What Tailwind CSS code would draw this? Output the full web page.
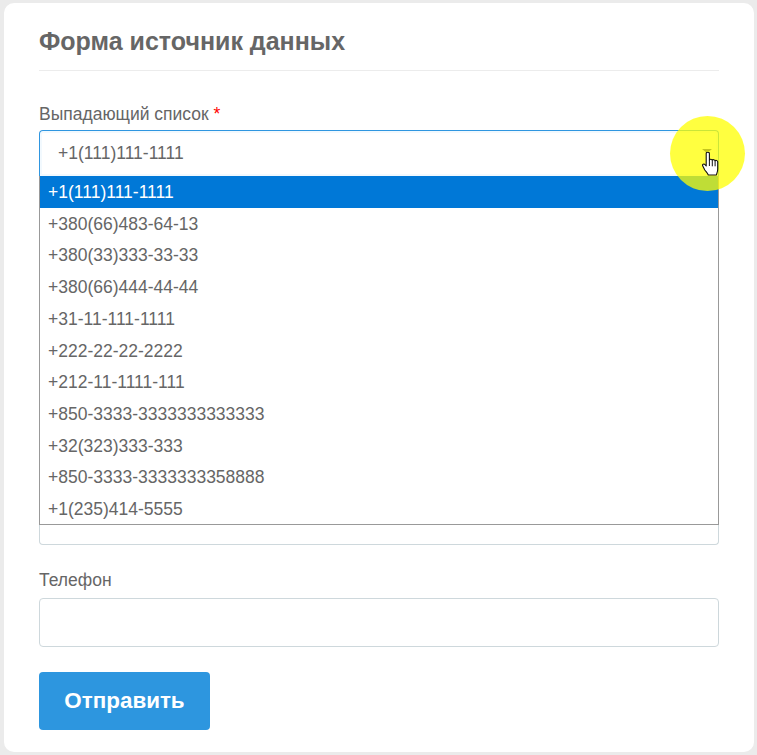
<!DOCTYPE html>
<html lang="ru">
<head>
<meta charset="utf-8">
<script src="https://cdn.jsdelivr.net/npm/@tailwindcss/browser@4"></script>
</head>
<body class="bg-[#ebebeb] font-['Liberation_Sans',Arial,sans-serif] text-[#666]">
<div class="h-[755px] w-[757px] pl-[4px] pr-[3px] pt-[3px]">
  <form class="relative h-[749px] rounded-[10px] bg-white px-[35px] pt-[22px]">
    <h2 class="border-b border-[#ececec] pb-[13px] text-[25px] leading-[32px] font-bold text-[#666]">Форма источник данных</h2>
    <div class="mt-[33px] text-[17.5px] leading-[20px]">Выпадающий список <span class="text-[#f00]">*</span></div>
    <div class="relative mt-[6px]">
      <div class="relative flex h-[46px] items-center rounded-t-[4px] border border-b-0 border-[#2f96e0] bg-white pl-[18px] text-[17.5px] shadow-[inset_0_0_0_2px_#f2f9fe]">
        +1(111)111-1111
      </div>
      <ul class="absolute top-[46px] right-0 left-0 z-10 h-[349px] border border-t-0 border-[#999] bg-white text-[17.5px] leading-[30.7px]">
        <li class="bg-[#0078d7] pt-[1px] pl-[8px] text-white">+1(111)111-1111</li>
        <li class="pt-[1px] pl-[8px]">+380(66)483-64-13</li>
        <li class="pt-[1px] pl-[8px]">+380(33)333-33-33</li>
        <li class="pt-[1px] pl-[8px]">+380(66)444-44-44</li>
        <li class="pt-[1px] pl-[8px]">+31-11-111-1111</li>
        <li class="pt-[1px] pl-[8px]">+222-22-22-2222</li>
        <li class="pt-[1px] pl-[8px]">+212-11-1111-111</li>
        <li class="pt-[1px] pl-[8px]">+850-3333-3333333333333</li>
        <li class="pt-[1px] pl-[8px]">+32(323)333-333</li>
        <li class="pt-[1px] pl-[8px]">+850-3333-3333333358888</li>
        <li class="pt-[1px] pl-[8px]">+1(235)414-5555</li>
      </ul>
      <div class="h-[369px] rounded-b-[4px] border border-t-0 border-[#ced8dc]"></div>
    </div>
    <div class="mt-[25px] text-[17.5px] leading-[20px]">Телефон</div>
    <div class="mt-[8px] h-[49px] rounded-[4px] border border-[#ced8dc] bg-white"></div>
    <button type="button" class="mt-[25px] block h-[58px] w-[171px] rounded-[4px] bg-[#2d96df] text-[22.4px] font-bold text-white">Отправить</button>

    <div class="pointer-events-none absolute top-[113px] left-[666px] z-20 h-[75px] w-[75px] rounded-full bg-[#ffff00]/75"></div>
    <span class="absolute top-[146px] left-[698px] z-30 h-0 w-0 border-x-[5px] border-t-[4px] border-x-transparent border-t-[#c4c41e]"></span>
    <svg class="pointer-events-none absolute top-[149px] left-[698px] z-30" width="18" height="25" viewBox="0 0 18 25">
      <path d="M4.200 1.600c0-2 3.200-2 3.200 0V8c.3-1 2.600-1 2.900.3.300-.9 2.500-.9 2.800.5.400-.7 2.500-.6 2.600 1V17c0 3-.9 4-1.300 6H6.300c-.7-2-2-3-3.500-5L.8 14c-.9-1.700 1.200-2.700 2.200-1.400l1.200 1.400Z" fill="#fff" stroke="#111" stroke-width="1.100" stroke-linejoin="round"/>
      <path d="M7.400 8v6M10.300 8.300v6M13.100 8.800v5.500" stroke="#111" stroke-width="1" fill="none"/>
    </svg>
  </form>
</div>
</body>
</html>
